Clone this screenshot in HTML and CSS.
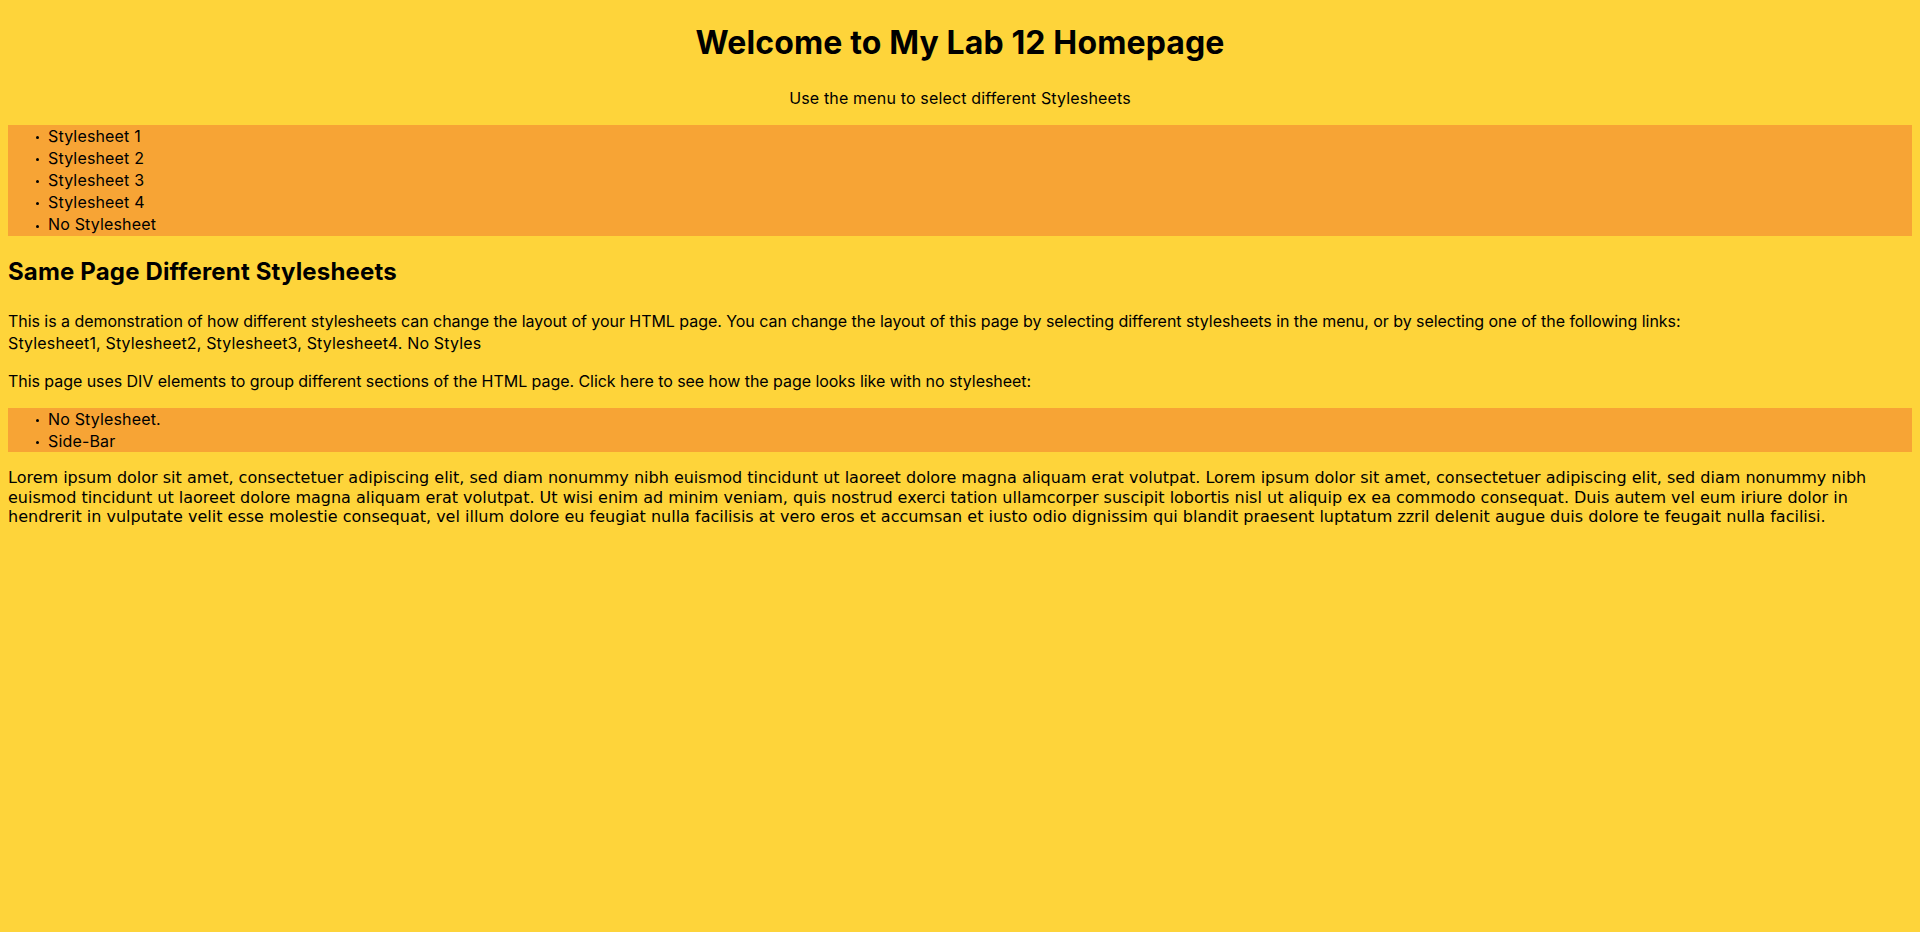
FILE: index.html
```html
<!DOCTYPE html>
<html lang="en">
<head>
<meta charset="utf-8">
<title>Lab 12 Homepage</title>
<link rel="stylesheet" href="styles.css">
</head>
<body>
<div class="header">
  <h1 class="title">Welcome to My Lab 12 Homepage</h1>
  <p class="subtitle">Use the menu to select different Stylesheets</p>
</div>
<ul class="menu">
  <li><a class="plain" href="#">Stylesheet 1</a></li>
  <li><a class="plain" href="#">Stylesheet 2</a></li>
  <li><a class="plain" href="#">Stylesheet 3</a></li>
  <li><a class="plain" href="#">Stylesheet 4</a></li>
  <li><a class="plain" href="#">No Stylesheet</a></li>
</ul>
<div class="content">
  <h2 class="section-title">Same Page Different Stylesheets</h2>
  <p class="text">This is a demonstration of how different stylesheets can change the layout of your HTML page. You can change the layout of this page by selecting different stylesheets in the menu, or by selecting one of the following links:<br><span class="links"><a class="plain" href="#">Stylesheet1</a>, <a class="plain" href="#">Stylesheet2</a>, <a class="plain" href="#">Stylesheet3</a>, <a class="plain" href="#">Stylesheet4</a>. <a class="plain" href="#">No Styles</a></span></p>
  <p class="text">This page uses DIV elements to group different sections of the HTML page. Click here to see how the page looks like with no stylesheet:</p>
  <ul class="menu">
    <li><a class="plain" href="#">No Stylesheet.</a></li>
    <li><a class="plain" href="#">Side-Bar</a></li>
  </ul>
  <p class="lorem">Lorem ipsum dolor sit amet, consectetuer adipiscing elit, sed diam nonummy nibh euismod tincidunt ut laoreet dolore magna aliquam erat volutpat. Lorem ipsum dolor sit amet, consectetuer adipiscing elit, sed diam nonummy nibh euismod tincidunt ut laoreet dolore magna aliquam erat volutpat. Ut wisi enim ad minim veniam, quis nostrud exerci tation ullamcorper suscipit lobortis nisl ut aliquip ex ea commodo consequat. Duis autem vel eum iriure dolor in hendrerit in vulputate velit esse molestie consequat, vel illum dolore eu feugiat nulla facilisis at vero eros et accumsan et iusto odio dignissim qui blandit praesent luptatum zzril delenit augue duis dolore te feugait nulla facilisi.</p>
</div>
</body>
</html>
```
FILE: styles.css
```css
html {
  background: #fed43a;
}

body {
  margin: 0 8px 8px;
  background: #fed43a;
  color: #000;
  font-family: "Comic Sans MS", Inter, "Noto Sans", sans-serif;
  font-size: 16px;
  line-height: 1.38;
  letter-spacing: 0.01em;
}

.title {
  font-size: 32px;
  font-weight: bold;
  text-align: center;
  margin: 21.44px 0;
  letter-spacing: 0.004em;
}

.subtitle {
  text-align: center;
  margin: 16px 0;
}

.menu {
  margin: 0;
  padding: 0 0 0 40px;
  background: #f7a435;
  list-style: none;
}

.menu li::before {
  content: "";
  display: inline-block;
  width: 3px;
  height: 3px;
  border-radius: 50%;
  background: #000;
  margin-left: -12px;
  margin-right: 9px;
  vertical-align: middle;
}

.plain {
  color: inherit;
  text-decoration: none;
}

.section-title {
  font-size: 24px;
  font-weight: bold;
  line-height: 1.44;
  margin: 0.83em 0;
}

.text {
  margin: 16px 0;
  letter-spacing: -0.05px;
}

.links {
  letter-spacing: 0.15px;
}

.lorem {
  margin: 16px 0;
  font-family: Verdana, "DejaVu Sans", sans-serif;
  line-height: 1.215;
  letter-spacing: 0;
}
```
